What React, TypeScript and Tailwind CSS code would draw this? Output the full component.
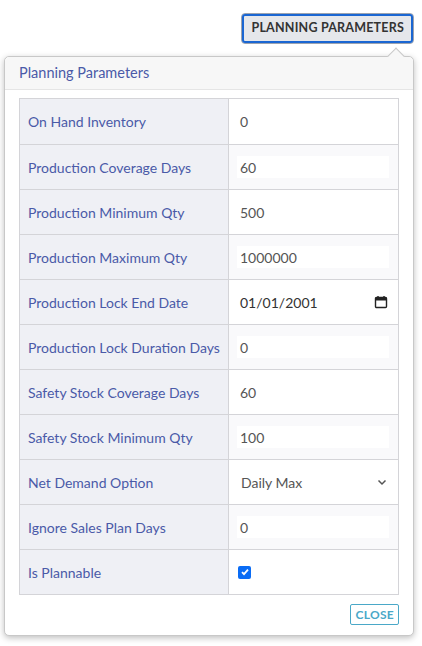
import React from "react";

const rows: [string, string, string][] = [
  ["On Hand Inventory", "0", "plain"],
  ["Production Coverage Days", "60", "input"],
  ["Production Minimum Qty", "500", "plain"],
  ["Production Maximum Qty", "1000000", "input"],
  ["Production Lock End Date", "01/01/2001", "date"],
  ["Production Lock Duration Days", "0", "input"],
  ["Safety Stock Coverage Days", "60", "plain"],
  ["Safety Stock Minimum Qty", "100", "input"],
  ["Net Demand Option", "Daily Max", "select"],
  ["Ignore Sales Plan Days", "0", "input"],
  ["Is Plannable", "", "check"],
];

export default function App() {
  return (
    <div className="w-[422px] h-[646px] bg-white relative overflow-hidden" style={{ fontFamily: "Lato, 'Noto Sans', sans-serif" }}>
      <div className="flex justify-end pt-[13px] pr-[8px]">
        <button className="h-[31px] px-[9px] rounded-[4px] border border-[#9ca3af] bg-[#e5e7eb] outline outline-2 outline-[#1a66d2] -outline-offset-[3px] text-[12.5px] font-bold tracking-[0.2px] text-[#333]">
          PLANNING PARAMETERS
        </button>
      </div>
      <div className="absolute left-[4px] top-[56px] w-[410px] h-[580px] bg-white border border-[#c8c8c8] rounded-[5px] shadow-[0_2px_6px_rgba(0,0,0,0.25)]">
        <div className="absolute -top-[7px] right-[11px] w-[12px] h-[12px] bg-[#f7f7f7] border-l border-t border-[#c8c8c8] rotate-45" />
        <div className="relative h-[33px] bg-[#f7f7f7] border-b border-[#e5e5e5] rounded-t-[5px] px-[14px] flex items-center text-[14.5px] text-[#4a5aa8]">
          Planning Parameters
        </div>
        <div className="px-[14px] pt-[8px]">
          <div className="border border-[#d4d4d8]">
            {rows.map(([label, val, kind], i) => (
              <div key={label} className={`flex h-[45px] ${i > 0 ? "border-t border-[#d4d4d8]" : ""}`}>
                <div className="w-[209px] bg-[#eff0f5] border-r border-[#d4d4d8] flex items-center pl-[8px] text-[14px] text-[#4a5aa8]">{label}</div>
                <div className={`flex-1 flex items-center px-[8px] text-[14px] text-[#555] ${i % 2 ? "bg-[#f9f9fb]" : "bg-white"}`}>
                  {kind === "check" ? (
                    <span className="w-[13px] h-[13px] rounded-[2px] bg-[#0a6cf5] flex items-center justify-center ml-[1px]">
                      <svg width="10" height="10" viewBox="0 0 10 10"><path d="M2 5.2l2 2 4-4.5" stroke="white" strokeWidth="1.8" fill="none" /></svg>
                    </span>
                  ) : kind === "select" ? (
                    <div className="flex-1 flex items-center justify-between pl-[4px] pr-[3px]">
                      <span>{val}</span>
                      <svg width="10" height="8" viewBox="0 0 10 8"><path d="M1.5 2.5l3.5 3.5 3.5-3.5" stroke="#555" strokeWidth="1.5" fill="none" /></svg>
                    </div>
                  ) : kind === "date" ? (
                    <div className="flex-1 flex items-center justify-between pl-[3px] pr-[2px] text-[#333]">
                      <span>{val}</span>
                      <svg width="14" height="14" viewBox="0 0 14 14"><rect x="1.5" y="2.5" width="11" height="10" rx="1" stroke="#222" strokeWidth="1.4" fill="none" /><rect x="1.5" y="2.5" width="11" height="3" fill="#222" /><path d="M4 1v2M10 1v2" stroke="#222" strokeWidth="1.4" /></svg>
                    </div>
                  ) : (
                    <div className={`flex-1 h-[22px] flex items-center pl-[3px] mr-[1px] ${kind === "input" ? "bg-white" : ""}`}>{val}</div>
                  )}
                </div>
              </div>
            ))}
          </div>
          <div className="flex justify-end mt-[9px]">
            <button className="h-[21px] px-[4px] border border-[#4aa8c8] rounded-[2px] text-[12px] font-bold text-[#4aa8c8] tracking-[0.3px]">CLOSE</button>
          </div>
        </div>
      </div>
    </div>
  );
}
